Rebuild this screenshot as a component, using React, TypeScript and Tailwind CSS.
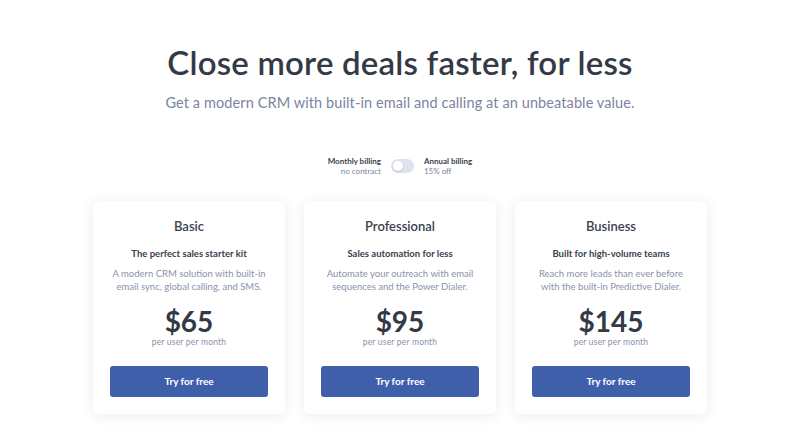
import React, { useState } from 'react';

type Plan = {
  name: string;
  tagline: string;
  description: string[];
  price: string;
};

const plans: Plan[] = [
  {
    name: 'Basic',
    tagline: 'The perfect sales starter kit',
    description: ['A modern CRM solution with built-in', 'email sync, global calling, and SMS.'],
    price: '$65',
  },
  {
    name: 'Professional',
    tagline: 'Sales automation for less',
    description: ['Automate your outreach with email', 'sequences and the Power Dialer.'],
    price: '$95',
  },
  {
    name: 'Business',
    tagline: 'Built for high-volume teams',
    description: ['Reach more leads than ever before', 'with the built-in Predictive Dialer.'],
    price: '$145',
  },
];

const App: React.FC = () => {
  const [annual, setAnnual] = useState(false);

  return (
    <div className="min-h-screen bg-white font-['Lato','Liberation_Sans',sans-serif] text-[#333a46]">
      <div className="flex flex-col items-center pt-[42px]">
        <h1 className="text-[33px] font-semibold leading-[40px] tracking-[0.2px]">
          Close more deals faster, for less
        </h1>
        <p className="mt-[11px] text-[14.5px] leading-[20px] tracking-[0.1px] text-[#7b84a0]">
          Get a modern CRM with built-in email and calling at an unbeatable value.
        </p>

        <div className="mt-[43px] flex items-center">
          <div className="text-right leading-[10px]">
            <div className="text-[8px] font-bold text-[#3b414d]">Monthly billing</div>
            <div className="text-[8px] text-[#7b84a0]">no contract</div>
          </div>
          <button
            type="button"
            onClick={() => setAnnual(!annual)}
            className="mx-[10px] flex h-[14px] w-[23px] items-center rounded-full bg-[#dfe3ee] p-[2px]"
          >
            <span
              className={
                annual
                  ? 'ml-auto h-[10px] w-[10px] rounded-full bg-white shadow'
                  : 'h-[10px] w-[10px] rounded-full bg-white shadow'
              }
            />
          </button>
          <div className="leading-[10px]">
            <div className="text-[8px] font-bold text-[#3b414d]">Annual billing</div>
            <div className="text-[8px] text-[#7b84a0]">15% off</div>
          </div>
        </div>

        <div className="mt-[25px] flex gap-[19px]">
          {plans.map(plan => (
            <div
              key={plan.name}
              className="flex h-[213px] w-[192px] flex-col items-center rounded-md bg-white px-[17px] pt-[17px] shadow-[0_2px_14px_rgba(30,40,70,0.09)]"
            >
              <h2 className="text-[13px] font-semibold leading-[16px] text-[#3b414d]">{plan.name}</h2>
              <p className="mt-[13px] text-[9.5px] font-bold leading-[14px] text-[#3b414d]">{plan.tagline}</p>
              <p className="mt-[6px] text-center text-[9.5px] leading-[13px] text-[#8a92ab]">
                {plan.description[0]}
                <br />
                {plan.description[1]}
              </p>
              <div className="mt-[13px] text-[28px] font-bold leading-[30px] text-[#333a46]">{plan.price}</div>
              <div className="mt-[1px] text-[8.5px] leading-[10px] tracking-[0.2px] text-[#8a92ab]">per user per month</div>
              <button
                type="button"
                className="mt-[19px] h-[31px] w-full rounded-[3px] bg-[#3f5fab] text-[10px] font-bold text-white"
              >
                Try for free
              </button>
            </div>
          ))}
        </div>
      </div>
    </div>
  );
};

export default App;
